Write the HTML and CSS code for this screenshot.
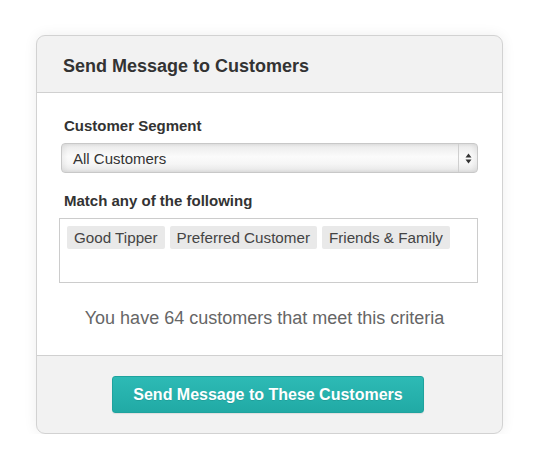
FILE: index.html
```html
<!DOCTYPE html>
<html>
<head>
<meta charset="utf-8">
<link rel="stylesheet" href="styles.css">
</head>
<body>
<div class="card">
  <div class="card-header">
    <h1 class="title">Send Message to Customers</h1>
  </div>
  <div class="card-body">
    <div class="label">Customer Segment</div>
    <div class="select">
      <span class="select-text">All Customers</span>
      <span class="select-arrows">
        <svg width="7" height="11" viewBox="0 0 7 11"><path d="M3.5 0.5 L6.5 4.5 L0.5 4.5 Z" fill="#333"/><path d="M3.5 10.5 L6.5 6.5 L0.5 6.5 Z" fill="#333"/></svg>
      </span>
    </div>
    <div class="label label-second">Match any of the following</div>
    <div class="tagbox">
      <span class="tag">Good Tipper</span>
      <span class="tag">Preferred Customer</span>
      <span class="tag">Friends &amp; Family</span>
    </div>
    <p class="criteria">You have 64 customers that meet this criteria</p>
  </div>
  <div class="card-footer">
    <button class="btn">Send Message to These Customers</button>
  </div>
</div>
</body>
</html>
```
FILE: styles.css
```css
html, body {
  margin: 0;
  padding: 0;
  background: #ffffff;
}
body {
  padding: 35px 0 0 36px;
  font-family: "Liberation Sans", Arial, Helvetica, sans-serif;
}
.card {
  width: 465px;
  border: 1px solid #d2d2d2;
  border-radius: 9px;
  box-shadow: 0 0 14px rgba(0, 0, 0, 0.07);
  overflow: hidden;
  background: #f2f2f2;
}
.card-header {
  height: 57px;
  border-bottom: 1px solid #d0d0d0;
  box-sizing: border-box;
  display: flex;
  align-items: center;
  padding-left: 26px;
}
.title {
  margin: 0;
  font-size: 18px;
  font-weight: bold;
  color: #333;
  position: relative;
  top: 2px;
}
.card-body {
  background: #fff;
  padding: 23px 24px 0 24px;
  height: 263px;
  box-sizing: border-box;
  border-bottom: 1px solid #d0d0d0;
}
.label {
  font-size: 15px;
  font-weight: bold;
  color: #333;
  line-height: 20px;
  padding-left: 3px;
}
.select {
  margin-top: 7px;
  height: 30px;
  box-sizing: border-box;
  border: 1px solid #c8c8c8;
  border-radius: 4px;
  background: linear-gradient(#e9e9e9, #fbfbfb 45%, #f6f6f6 70%, #e6e6e6);
  box-shadow: inset 3px 0 4px rgba(0,0,0,0.05), inset -3px 0 4px rgba(0,0,0,0.05);
  display: flex;
  align-items: center;
}
.select-text {
  flex: 1;
  padding-left: 11px;
  font-size: 15px;
  color: #333;
}
.select-arrows {
  width: 18px;
  height: 100%;
  border-left: 1px solid #cfcfcf;
  display: flex;
  align-items: center;
  justify-content: center;
}
.label-second {
  margin-top: 18px;
}
.tagbox {
  margin-top: 7px;
  margin-left: -2px;
  height: 65px;
  box-sizing: border-box;
  border: 1px solid #cccccc;
  padding: 7px 7px;
  display: flex;
  align-items: flex-start;
  gap: 5px;
}
.tag {
  background: #e9e9e9;
  border-radius: 2px;
  height: 23px;
  line-height: 23px;
  padding: 0 7px;
  font-size: 15.2px;
  color: #444;
}
.criteria {
  margin: 24px 0 0 0;
  padding-right: 10px;
  text-align: center;
  font-size: 18px;
  line-height: 22px;
  color: #666;
}
.card-footer {
  height: 77px;
  display: flex;
  justify-content: center;
  padding-top: 20px;
  box-sizing: border-box;
}
.btn {
  width: 312px;
  height: 37px;
  border: 1px solid #1fa39e;
  border-radius: 3px;
  background: linear-gradient(#2dbab5, #21aaa5);
  color: #fff;
  font-family: "Liberation Sans", Arial, Helvetica, sans-serif;
  font-size: 16px;
  font-weight: bold;
  text-shadow: 0 1px 0 rgba(0,0,0,0.1);
  box-shadow: 0 1px 1px rgba(0,0,0,0.08);
  margin-right: 3px;
}
```
